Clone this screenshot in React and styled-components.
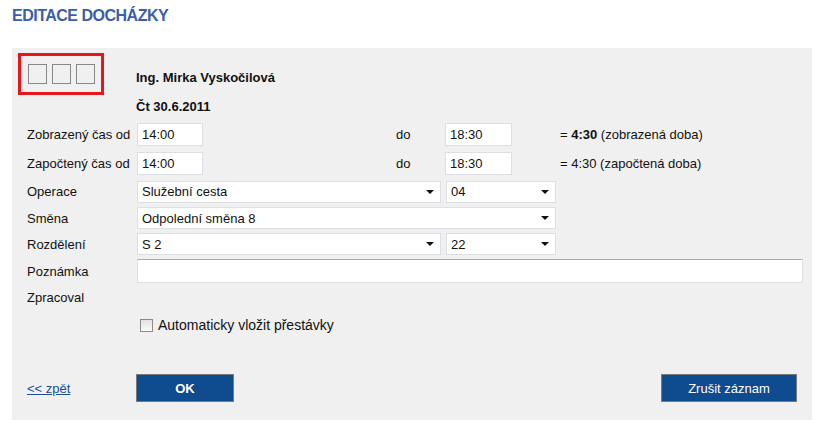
import React from "react";
import styled, { createGlobalStyle } from "styled-components";

const Global = createGlobalStyle`
  body {
    margin: 0;
    background: #ffffff;
    font-family: "Liberation Sans", Arial, sans-serif;
    font-size: 13px;
    color: #111;
  }
`;

const Page = styled.div`
  width: 817px;
  height: 424px;
  padding: 0 12px;
  box-sizing: border-box;
`;

const Title = styled.h1`
  margin: 0;
  height: 48px;
  padding-top: 7px;
  box-sizing: border-box;
  font-size: 16px;
  letter-spacing: -0.5px;
  font-weight: bold;
  color: #3b5ea8;
`;

const Panel = styled.div`
  background: #f0f0f0;
  width: 800px;
  height: 372px;
  padding: 5px 0 0 15px;
  box-sizing: border-box;
  display: flex;
  flex-direction: column;
`;

const Head = styled.div`
  display: flex;
  align-items: flex-start;
  margin-left: -9px;
`;

const IconBox = styled.div`
  width: 73px;
  height: 36px;
  border: 3px solid #e8151b;
  display: flex;
  align-items: center;
  gap: 5px;
  padding-left: 7px;
  box-sizing: content-box;
`;

const Square = styled.span`
  width: 17px;
  height: 18px;
  border: 1px solid #888;
`;

const Person = styled.div`
  margin-left: 32px;
  padding-top: 17px;
  line-height: 15px;
  font-weight: bold;
  display: flex;
  flex-direction: column;
  gap: 14px;
`;

const Row = styled.div`
  display: flex;
  align-items: center;
  height: ${(p) => p.h}px;
  margin-top: ${(p) => p.mt || 0}px;
`;

const Label = styled.span`
  width: 110px;
  flex-shrink: 0;
`;

const TextInput = styled.div`
  width: ${(p) => p.w}px;
  height: ${(p) => p.ht || 22}px;
  background: #fff;
  border: 1px solid #dcdfe4;
  border-top-color: ${(p) => (p.dark ? "#a9a9a9" : "#dcdfe4")};
  box-sizing: border-box;
  padding-left: 4px;
  display: flex;
  align-items: center;
  margin-left: ${(p) => p.ml || 0}px;
`;

const Select = styled(TextInput)`
  justify-content: space-between;
  padding-right: 6px;
  &::after {
    content: "";
    border-left: 4px solid transparent;
    border-right: 4px solid transparent;
    border-top: 4px solid #111;
  }
`;

const Do = styled.span`
  margin-left: ${(p) => p.ml}px;
  width: 49px;
`;

const Result = styled.span`
  margin-left: 48px;
  & b {
    font-weight: bold;
  }
`;

const CheckRow = styled.label`
  display: flex;
  align-items: center;
  height: 14px;
  gap: 5px;
  font-size: 14px;
  margin: 9px 0 0 113px;
`;

const Check = styled.span`
  width: 11px;
  height: 11px;
  border: 1px solid #8a8a8a;
  background: linear-gradient(#e2e2e2, #fafafa);
`;

const Footer = styled.div`
  display: flex;
  align-items: center;
  margin-top: 42px;
`;

const Back = styled.a`
  width: 109px;
  color: #1a4f91;
  text-decoration: underline;
`;

const Button = styled.button`
  width: ${(p) => p.w}px;
  height: 28px;
  background: #0f4b8f;
  color: #fff;
  border: 1px solid #7a7a7a;
  font-family: inherit;
  font-size: 13px;
  font-weight: ${(p) => (p.bold ? "bold" : "normal")};
  margin-left: ${(p) => p.ml || 0}px;
  padding: 0;
`;

export default function App() {
  return (
    <Page>
      <Global />
      <Title>EDITACE DOCHÁZKY</Title>
      <Panel>
        <Head>
          <IconBox>
            <Square />
            <Square />
            <Square />
          </IconBox>
          <Person>
            <span>Ing. Mirka Vyskočilová</span>
            <span>Čt 30.6.2011</span>
          </Person>
        </Head>
        <Row h={29} mt={6}>
          <Label>Zobrazený čas od</Label>
          <TextInput w={66} ht={23}>14:00</TextInput>
          <Do ml={193}>do</Do>
          <TextInput w={67} ht={23}>18:30</TextInput>
          <Result>
            = <b>4:30</b> (zobrazená doba)
          </Result>
        </Row>
        <Row h={29}>
          <Label>Započtený čas od</Label>
          <TextInput w={66} ht={23}>14:00</TextInput>
          <Do ml={193}>do</Do>
          <TextInput w={67} ht={23}>18:30</TextInput>
          <Result>= 4:30 (započtená doba)</Result>
        </Row>
        <Row h={27}>
          <Label>Operace</Label>
          <Select w={304}>Služební cesta</Select>
          <Select w={110} ml={5}>04</Select>
        </Row>
        <Row h={26}>
          <Label>Směna</Label>
          <Select w={419}>Odpolední směna 8</Select>
        </Row>
        <Row h={26}>
          <Label>Rozdělení</Label>
          <Select w={304}>S 2</Select>
          <Select w={110} ml={5}>22</Select>
        </Row>
        <Row h={28}>
          <Label>Poznámka</Label>
          <TextInput w={666} ht={24} dark />
        </Row>
        <Row h={24}>
          <Label>Zpracoval</Label>
        </Row>
        <CheckRow>
          <Check />
          Automaticky vložit přestávky
        </CheckRow>
        <Footer>
          <Back href="#">&lt;&lt; zpět</Back>
          <Button w={98} bold>OK</Button>
          <Button w={136} ml={427}>Zrušit záznam</Button>
        </Footer>
      </Panel>
    </Page>
  );
}
